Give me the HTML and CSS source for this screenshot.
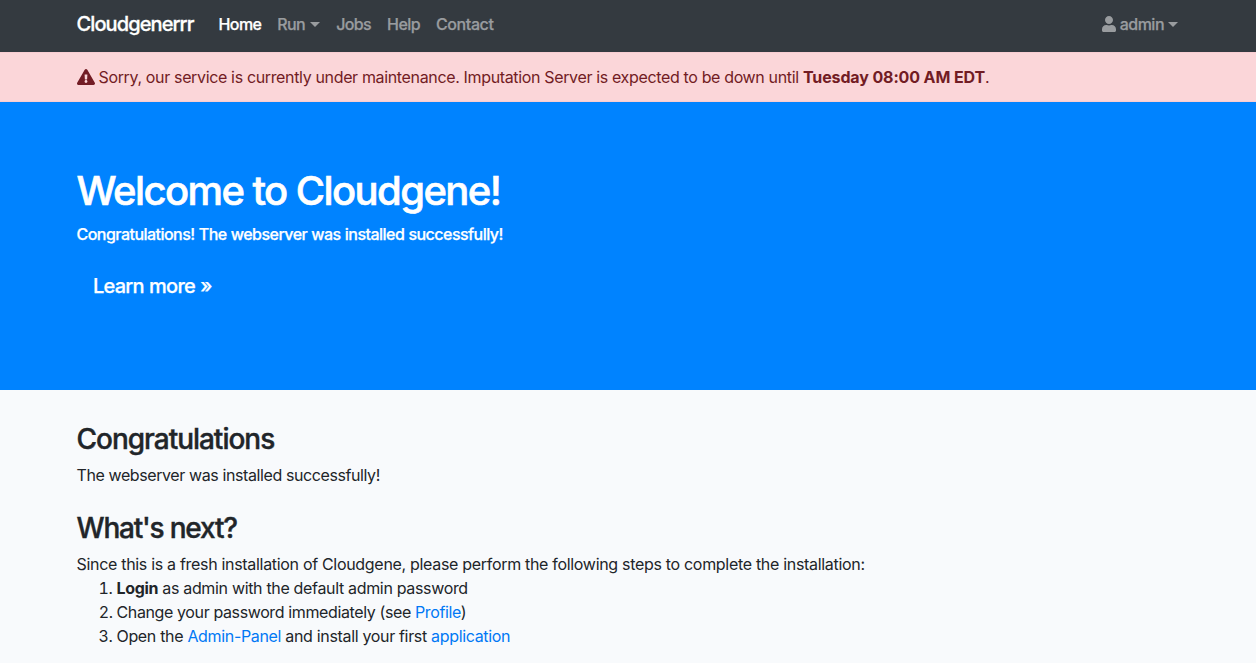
FILE: index.html
```html
<!DOCTYPE html>
<html lang="en">
<head>
<meta charset="utf-8">
<title>Cloudgenerrr</title>
<link rel="stylesheet" href="styles.css">
</head>
<body>
<nav class="navbar">
  <div class="container nav-row">
    <a class="brand">Cloudgenerrr</a>
    <ul class="nav">
      <li class="active">Home</li>
      <li class="caret">Run</li>
      <li>Jobs</li>
      <li>Help</li>
      <li class="contact">Contact</li>
    </ul>
    <div class="user caret">
      <svg class="user-icon" viewBox="0 0 448 512"><path fill="currentColor" d="M224 256c70.700 0 128-57.300 128-128S294.700 0 224 0 96 57.300 96 128s57.300 128 128 128zm89.600 32h-16.700c-22.200 10.200-46.900 16-72.900 16s-50.600-5.800-72.900-16h-16.700C60.200 288 0 348.200 0 422.400V464c0 26.500 21.500 48 48 48h352c26.500 0 48-21.500 48-48v-41.600c0-74.200-60.200-134.400-134.400-134.400z"/></svg>
      <span>admin</span>
    </div>
  </div>
</nav>
<div class="alert">
  <div class="container alert-row">
    <svg class="warn-icon" viewBox="0 0 576 512"><path fill="currentColor" d="M569.500 440c18.500 32-4.700 72-41.600 72H48.100c-36.900 0-60-40.100-41.600-72L246.400 24c18.500-32 64.700-32 83.200 0l239.900 416zM288 354c-25.400 0-46 20.600-46 46s20.600 46 46 46 46-20.600 46-46-20.600-46-46-46zm-43.700-165.300l7.400 136c.4 6.400 5.600 11.300 12 11.300h48.500c6.400 0 11.600-5 12-11.300l7.400-136c.4-6.900-5.100-12.700-12-12.700h-63.400c-6.900 0-12.300 5.800-12 12.700z"/></svg>
    <p class="notice">Sorry, our service is currently under maintenance. Imputation Server is expected to be down until <b>Tuesday 08:00 AM EDT</b>.</p>
  </div>
</div>
<header class="hero">
  <div class="container">
    <h1>Welcome to Cloudgene!</h1>
    <p class="lead">Congratulations! The webserver was installed successfully!</p>
    <a class="more">Learn more »</a>
  </div>
</header>
<main class="container content">
  <h2>Congratulations</h2>
  <p class="para">The webserver was installed successfully!</p>
  <h2 class="next">What's next?</h2>
  <p class="intro">Since this is a fresh installation of Cloudgene, please perform the following steps to complete the installation:</p>
  <ol>
    <li><b>Login</b> as admin with the default admin password</li>
    <li class="tight">Change your password immediately (see <a>Profile</a>)</li>
    <li>Open the <a>Admin-Panel</a> and install your first <a>application</a></li>
  </ol>
</main>
</body>
</html>
```
FILE: styles.css
```css
* { box-sizing: border-box; }
body { margin: 0; font: 16px/24px Inter, sans-serif; letter-spacing: -0.3px; color: #212529; background: #f8fafc; }
h1, h2, p, ul, ol { margin: 0; padding: 0; }
.container { width: 1140px; margin: 0 auto; padding: 0 19px 0 18.5px; }
.navbar { height: 52px; background: #343a40; }
.nav-row { display: flex; align-items: center; height: 48px; }
.brand { width: 142px; font-size: 20px; color: #fff; font-weight: 500; letter-spacing: -0.9px; -webkit-text-stroke: 0.3px; }
.nav { display: flex; gap: 16px; list-style: none; font-weight: 500; letter-spacing: -0.6px; color: #999c9f; -webkit-text-stroke: 0.25px; }
.nav .active { color: #fff; }
.nav .contact { letter-spacing: -0.4px; }
.caret { display: flex; align-items: center; }
.caret::after { content: ""; margin-left: 5px; border: 5px solid transparent; border-top-color: currentColor; border-bottom: 0; }
.user { margin-left: auto; padding-right: 1px; color: #999c9f; font-weight: 500; letter-spacing: -0.5px; -webkit-text-stroke: 0.25px; }
.user.caret::after { margin-left: 4px; }
.user-icon { width: 14px; height: 16px; margin-right: 4px; }
.alert { height: 50px; background: #fbd6d9; color: #721c24; border: solid #f8cdd2; border-width: 1px 0; }
.alert-row { display: flex; align-items: center; height: 48px; }
.warn-icon { width: 18px; height: 16px; margin-right: 4px; }
.notice { letter-spacing: -0.35px; }
.notice b { letter-spacing: -0.12px; }
.hero { height: 288px; padding-top: 65px; background: #0083ff; color: #fff; }
h1 { font-size: 40px; line-height: 48px; font-weight: 500; letter-spacing: -1.58px; margin-bottom: 7px; -webkit-text-stroke: 0.6px; }
.lead { font-weight: 500; letter-spacing: -0.53px; word-spacing: 0.4px; -webkit-text-stroke: 0.25px; }
.more { display: block; padding: 25px 16.5px; font-size: 20px; line-height: 30px; font-weight: 500; letter-spacing: -0.75px; word-spacing: 0.6px; -webkit-text-stroke: 0.25px; }
.content { padding-top: 32px; }
h2 { font-size: 28px; line-height: 34px; font-weight: 500; letter-spacing: -1.02px; margin-bottom: 7px; -webkit-text-stroke: 0.4px; }
.next { letter-spacing: -1.2px; }
.para { margin-bottom: 24px; letter-spacing: -0.4px; }
.intro { letter-spacing: -0.31px; }
ol { padding-left: 40px; letter-spacing: -0.33px; }
ol .tight { letter-spacing: -0.38px; }
.content a { color: #0078f5; }
```
